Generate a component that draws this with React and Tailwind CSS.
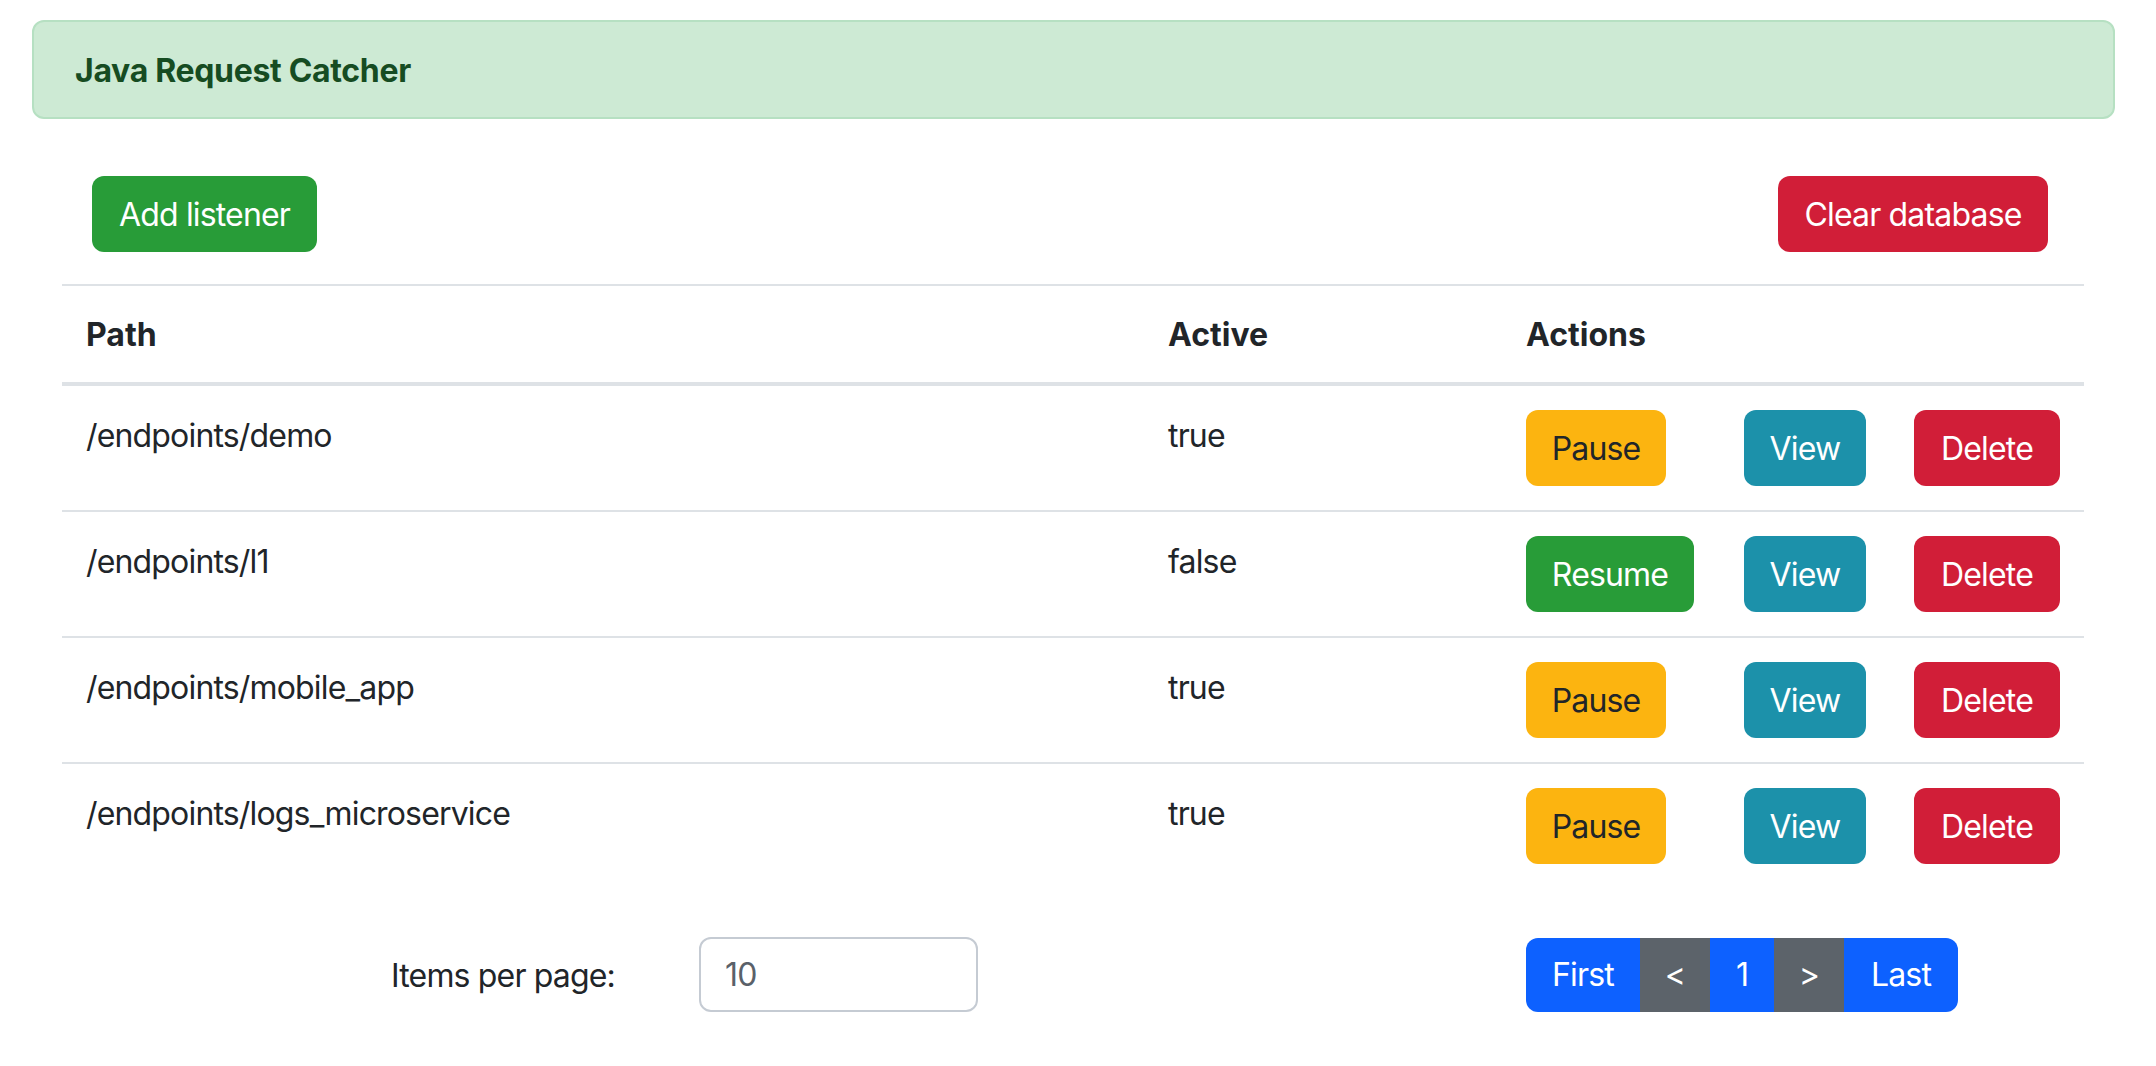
import React from "react";

const rows = [
  { path: "/endpoints/demo", active: true },
  { path: "/endpoints/l1", active: false },
  { path: "/endpoints/mobile_app", active: true },
  { path: "/endpoints/logs_microservice", active: true },
];

const btn = "h-[76px] flex items-center justify-center rounded-[12px] pt-[2px]";

export default function App() {
  return (
    <div className="min-h-screen bg-white font-[Inter,'Liberation_Sans',sans-serif] text-[32px] leading-[48px] tracking-[-0.026em] text-[#212529]">
      <div className="pt-[20px] pl-[32px] pr-[41px]">
        <div className="h-[99px] flex items-center pt-[2px] px-[41px] rounded-[12px] border-2 border-[#b6e0c2] bg-[#cdead4] text-[#164c22] font-bold text-[32px] tracking-[-0.01em]">
          Java Request Catcher
        </div>
      </div>

      <div className="pl-[62px] pr-[72px]">
        <div className="mt-[57px] flex justify-between pl-[30px] pr-[36px]">
          <button className={`w-[225px] ${btn} bg-[#289c38] text-white`}>Add listener</button>
          <button className={`w-[270px] ${btn} bg-[#d11e38] text-white`}>Clear database</button>
        </div>

        <table className="mt-[32px] w-full table-fixed border-separate border-spacing-0">
          <colgroup>
            <col className="w-[1082px]" />
            <col className="w-[358px]" />
            <col className="w-[218px]" />
            <col className="w-[170px]" />
            <col />
          </colgroup>
          <thead>
            <tr>
              <th className="text-left font-bold tracking-normal px-[24px] pt-[25px] pb-[23px] border-t-2 border-b-4 border-[#dee2e6]">Path</th>
              <th className="text-left font-bold tracking-normal px-[24px] pt-[25px] pb-[23px] border-t-2 border-b-4 border-[#dee2e6]">Active</th>
              <th colSpan={3} className="text-left font-bold tracking-normal px-[24px] pt-[25px] pb-[23px] border-t-2 border-b-4 border-[#dee2e6]">Actions</th>
            </tr>
          </thead>
          <tbody>
            {rows.map((r, i) => {
              const b = i === 0 ? "" : "border-t-2 border-[#dee2e6]";
              return (
                <tr key={r.path}>
                  <td className={`align-top px-[24px] pt-[26px] pb-[22px] ${b}`}>{r.path}</td>
                  <td className={`align-top px-[24px] pt-[26px] pb-[22px] ${b}`}>{r.active ? "true" : "false"}</td>
                  <td className={`align-top p-[24px] ${b}`}>
                    {r.active ? (
                      <button className={`w-[140px] ${btn} bg-[#fcb410] text-[#212529]`}>Pause</button>
                    ) : (
                      <button className={`w-[168px] ${btn} bg-[#289c38] text-white`}>Resume</button>
                    )}
                  </td>
                  <td className={`align-top p-[24px] ${b}`}>
                    <button className={`w-[122px] ${btn} bg-[#1c91aa] text-white`}>View</button>
                  </td>
                  <td className={`align-top p-[24px] ${b}`}>
                    <button className={`w-[146px] ${btn} bg-[#d11e38] text-white`}>Delete</button>
                  </td>
                </tr>
              );
            })}
          </tbody>
        </table>

        <div className="mt-[48px] flex items-center">
          <div className="w-[637px] pl-[329px] pt-[4px]">Items per page:</div>
          <div className="w-[279px] h-[75px] flex items-center pt-[2px] px-[24px] rounded-[12px] border-2 border-[#c5cbd3] text-[#5a6169]">
            10
          </div>
          <div className="ml-[548px] flex h-[76px] pt-[2px] text-white">
            <span className="w-[114px] flex items-center justify-center bg-[#0d61ff] rounded-l-[12px]">First</span>
            <span className="w-[70px] flex items-center justify-center bg-[#5c636a]">&lt;</span>
            <span className="w-[64px] flex items-center justify-center bg-[#0d61ff]">1</span>
            <span className="w-[70px] flex items-center justify-center bg-[#5c636a]">&gt;</span>
            <span className="w-[114px] flex items-center justify-center bg-[#0d61ff] rounded-r-[12px]">Last</span>
          </div>
        </div>
      </div>
    </div>
  );
}
